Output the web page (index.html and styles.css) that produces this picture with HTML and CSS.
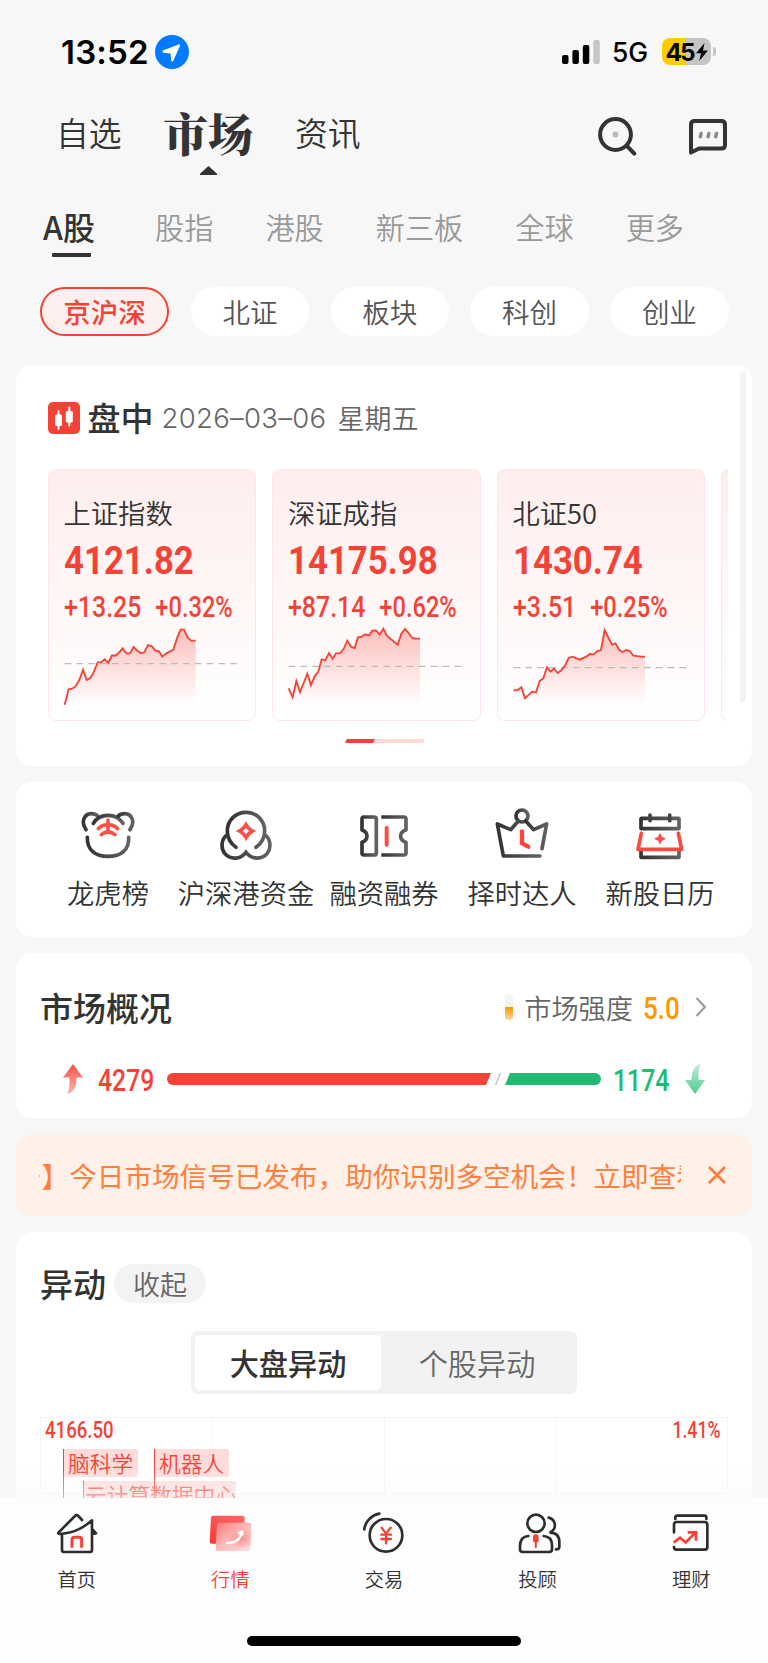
FILE: index.html
```html
<!DOCTYPE html>
<html lang="zh-CN">
<head>
    <meta charset="UTF-8">
    <meta name="viewport" content="width=device-width, initial-scale=1.0">
    <title>市场</title>
    <link rel="stylesheet" href="styles.css">
</head>
<body>
<div class="page">

    <!-- Status Bar -->
    <div class="status-bar">
        <div class="status-left">
            <span class="clock">13:52</span>
            <svg class="location" viewBox="0 0 34 34">
                <circle cx="17" cy="17" r="17" fill="#007aff"/>
                <path d="M24.2 9.3 L7.8 15.6 Q6.8 17.3 8 17.8 L15.6 18.4 L16.2 26 Q17 27.3 18.2 26 L25 10.8 Q25.3 9.2 24.2 9.3 Z" fill="#fff"/>
            </svg>
        </div>
        <div class="status-right">
            <svg class="signal" viewBox="0 0 38 24">
                <rect x="0" y="15" width="6.5" height="9" rx="2"/>
                <rect x="10.4" y="10" width="6.5" height="14" rx="2"/>
                <rect x="20.8" y="5" width="6.5" height="19" rx="2"/>
                <rect x="31.3" y="0" width="6.5" height="24" rx="2" fill="#c6c6c6"/>
            </svg>
            <span class="network">5G</span>
            <div class="battery">
                <span class="level">45</span>
                <svg class="bolt" viewBox="0 0 12 18"><path d="M8.5 0 L0 10.2 H5 L3.2 18 L12 7.4 H7 Z"/></svg>
            </div>
            <span class="battery-cap"></span>
        </div>
    </div>

    <!-- Main Navigation -->
    <div class="main-nav">
        <span class="nav-item">自选</span>
        <span class="nav-item active">市场</span>
        <span class="nav-item">资讯</span>
        <div class="nav-icons">
            <svg width="40" height="40" viewBox="0 0 40 40" fill="none" stroke="#333" stroke-width="4" stroke-linecap="round">
                <circle cx="17.5" cy="18.5" r="15.4"/>
                <path d="M29.5 30.5 L36.3 37.6"/>
                <circle cx="17.5" cy="18.5" r="3" fill="#bbb" stroke="none"/>
            </svg>
            <svg width="40" height="40" viewBox="0 0 40 40" fill="none" stroke="#333" stroke-width="4" stroke-linejoin="round">
                <path d="M3 36.5 V8.5 Q3 5 6.5 5 H33.5 Q37 5 37 8.5 V29 Q37 32.5 33.5 32.5 H11 Q8 34 3 36.5 Z"/>
                <path d="M12.3 20.7 L13.2 17.4 M20 20.7 L20.9 17.4 M27.7 20.7 L28.6 17.4" stroke="#888" stroke-width="3.4" stroke-linecap="round"/>
            </svg>
        </div>
    </div>

    <!-- Market Tabs -->
    <div class="sub-nav">
        <span class="active">A股</span>
        <span>股指</span>
        <span>港股</span>
        <span>新三板</span>
        <span>全球</span>
        <span>更多</span>
    </div>

    <div class="chips">
        <span class="chip active">京沪深</span>
        <span class="chip">北证</span>
        <span class="chip">板块</span>
        <span class="chip">科创</span>
        <span class="chip">创业</span>
    </div>

    <!-- Index Cards -->
    <div class="card index-card">
        <span class="scrollbar"></span>
        <div class="session">
            <svg width="32" height="32" viewBox="0 0 32 32">
                <rect width="32" height="32" rx="5" fill="#f44336"/>
                <path d="M10.5 9 V27 M21.3 5.5 V23.5" stroke="#fff" stroke-width="2" stroke-linecap="round"/>
                <rect x="7" y="12.5" width="7" height="11.5" rx="1.5" fill="#fff"/>
                <rect x="17.8" y="9" width="7" height="11.5" rx="1.5" fill="#fff"/>
            </svg>
            <b>盘中</b>
            <span class="date">2026–03–06</span>
            <span class="weekday">星期五</span>
        </div>
        <div class="index-list">
            <div class="index">
                <div class="index-name">上证指数</div>
                <div class="index-value">4121.82</div>
                <div class="index-change"><span>+13.25</span><span class="percent">+0.32%</span></div>
                <svg class="spark" viewBox="100 520 525 245">
                    <defs>
                        <linearGradient id="fade" x1="0" y1="535" x2="0" y2="758" gradientUnits="userSpaceOnUse">
                            <stop offset="0" stop-color="#f44336" stop-opacity=".32"/>
                            <stop offset="1" stop-color="#f44336" stop-opacity="0"/>
                        </linearGradient>
                    </defs>
                    <path class="area" d="M105 762 L117 716 L127 714 L137 708 L149 688 L160 657 L171 688 L182 682 L192 665 L204 635 L214 635 L225 626 L236 637 L247 614 L257 615 L268 606 L279 593 L290 608 L301 608 L312 589 L323 600 L334 608 L344 605 L355 583 L366 586 L377 600 L388 602 L398 618 L410 608 L431 597 L443 560 L453 537 L463 537 L474 561 L485 570 L498 570 V758 H105 Z"/>
                    <path class="base" d="M105 639 H621"/>
                    <path class="line" d="M105 762 L117 716 L127 714 L137 708 L149 688 L160 657 L171 688 L182 682 L192 665 L204 635 L214 635 L225 626 L236 637 L247 614 L257 615 L268 606 L279 593 L290 608 L301 608 L312 589 L323 600 L334 608 L344 605 L355 583 L366 586 L377 600 L388 602 L398 618 L410 608 L431 597 L443 560 L453 537 L463 537 L474 561 L485 570 L498 570"/>
                </svg>
            </div>
            <div class="index">
                <div class="index-name">深证成指</div>
                <div class="index-value">14175.98</div>
                <div class="index-change"><span>+87.14</span><span class="percent">+0.62%</span></div>
                <svg class="spark" viewBox="82 520 525 245">
                    <path class="area" d="M87 713 L99 740 L110 691 L121 724 L132 697 L143 669 L154 703 L165 677 L176 663 L186 626 L197 629 L208 607 L219 624 L229 608 L240 608 L252 595 L263 570 L274 588 L285 592 L295 560 L306 558 L317 551 L328 554 L338 540 L349 539 L360 552 L371 534 L382 556 L414 582 L425 549 L436 535 L447 547 L457 561 L466 564 L481 564 V758 H87 Z"/>
                    <path class="base" d="M87 647 H606"/>
                    <path class="line" d="M87 713 L99 740 L110 691 L121 724 L132 697 L143 669 L154 703 L165 677 L176 663 L186 626 L197 629 L208 607 L219 624 L229 608 L240 608 L252 595 L263 570 L274 588 L285 592 L295 560 L306 558 L317 551 L328 554 L338 540 L349 539 L360 552 L371 534 L382 556 L414 582 L425 549 L436 535 L447 547 L457 561 L466 564 L481 564"/>
                </svg>
            </div>
            <div class="index">
                <div class="index-name">北证50</div>
                <div class="index-value">1430.74</div>
                <div class="index-change"><span>+3.51</span><span class="percent">+0.25%</span></div>
                <svg class="spark" viewBox="95 520 525 245">
                    <path class="area" d="M100 719 L112 718 L123 710 L134 743 L155 723 L167 725 L178 691 L189 683 L200 650 L211 663 L221 654 L232 667 L243 659 L254 645 L265 622 L276 618 L298 627 L319 617 L329 610 L340 611 L351 601 L362 598 L373 538 L384 560 L395 582 L405 578 L417 598 L427 604 L438 598 L448 601 L459 615 L482 618 L494 618 V758 H102 Z"/>
                    <path class="base" d="M100 651 H619"/>
                    <path class="line" d="M100 719 L112 718 L123 710 L134 743 L155 723 L167 725 L178 691 L189 683 L200 650 L211 663 L221 654 L232 667 L243 659 L254 645 L265 622 L276 618 L298 627 L319 617 L329 610 L340 611 L351 601 L362 598 L373 538 L384 560 L395 582 L405 578 L417 598 L427 604 L438 598 L448 601 L459 615 L482 618 L494 618"/>
                </svg>
            </div>
            <div class="index"></div>
        </div>
        <div class="pager"><span></span></div>
    </div>

    <!-- Shortcuts -->
    <div class="card shortcuts">
        <div class="shortcut">
            <svg viewBox="244 114 162 162">
                <defs>
                    <linearGradient id="ink" x1="0" y1="0" x2="1" y2="0">
                        <stop offset="0" stop-color="#333"/>
                        <stop offset="1" stop-color="#626262"/>
                    </linearGradient>
                </defs>
                <g fill="none" stroke="url(#ink)" stroke-width="11" stroke-linecap="round">
                    <path d="M259 179 C242 155 255 131 275 131 Q287 131 294 138"/>
                    <path d="M281 160 C300 128 350 128 370 160"/>
                    <path d="M356 138 Q363 131 375 131 C396 131 408 155 391 179"/>
                    <path d="M263 202 C262 240 287 259 325 259 C364 259 389 240 387 202"/>
                </g>
                <g fill="none" stroke="#f8504a" stroke-width="11" stroke-linecap="round">
                    <path d="M325 150 V184 M296 176 Q306 165 325 164 Q344 165 354 176 M305 194 Q325 178 346 194"/>
                </g>
            </svg>
            <span>龙虎榜</span>
        </div>
        <div class="shortcut">
            <svg viewBox="658 114 162 162">
                <g fill="none" stroke="url(#ink)" stroke-width="11" stroke-linecap="round">
                    <path d="M709 232 C688 217 683 197 683 183 C683 151 708 127 739 127 C770 127 795 151 795 183 C795 197 790 217 769 232"/>
                    <path d="M680 196 C665 208 663 235 675 250 C692 270 722 269 739 247 C756 269 786 270 803 250 C815 235 813 208 798 196"/>
                </g>
                <path d="M739 153 Q748 174 770 183 Q748 192 739 214 Q730 192 708 183 Q730 174 739 153 Z" fill="#f8504a"/>
                <path d="M739 174 L748 183 L739 192 L730 183 Z" fill="#fff"/>
            </svg>
            <span>沪深港资金</span>
        </div>
        <div class="shortcut">
            <svg viewBox="1071 114 162 162">
                <g fill="none" stroke="url(#ink)" stroke-width="11" stroke-linejoin="round">
                    <path d="M1091 141 H1122 Q1129 141 1129 148 V248 Q1129 255 1122 255 H1092 Q1086 255 1086 249 V217 Q1101 212 1101 198 Q1101 185 1086 180 V147 Q1086 141 1091 141 Z"/>
                    <path d="M1144 141 H1212 Q1218 141 1218 147 V180 Q1202 185 1202 198 Q1202 212 1218 217 V249 Q1218 255 1212 255 H1144"/>
                </g>
                <path d="M1160 173 V224" stroke="#f8504a" stroke-width="12" stroke-linecap="round"/>
            </svg>
            <span>融资融券</span>
        </div>
        <div class="shortcut">
            <svg viewBox="332 114 162 162">
                <g fill="none" stroke="url(#ink)" stroke-width="11" stroke-linecap="round" stroke-linejoin="round">
                    <circle cx="413" cy="138" r="18"/>
                    <path d="M402 153 L379 179 L339 162 L357 258 H467"/>
                    <path d="M424 153 L448 179 L487 162 L473 236"/>
                </g>
                <path d="M413 184 V220 L432 230" fill="none" stroke="#fa443c" stroke-width="13" stroke-linecap="round" stroke-linejoin="round"/>
            </svg>
            <span>择时达人</span>
        </div>
        <div class="shortcut">
            <svg viewBox="746 114 162 162">
                <g fill="none" stroke="url(#ink)" stroke-width="11" stroke-linejoin="round">
                    <rect x="770" y="145" width="114" height="31" rx="2"/>
                    <path d="M797 135 L797.1 152 M856 135 L856.1 152" stroke="#444" stroke-linecap="round"/>
                    <path d="M770 241 V262 H884 V241"/>
                </g>
                <path d="M771 190 L761 238 H892 L882 190" fill="none" stroke="#fa4a42" stroke-width="11" stroke-linecap="round" stroke-linejoin="round"/>
                <path d="M827 188 L833 200 L845 206 L833 212 L827 224 L821 212 L809 206 L821 200 Z" fill="#f8504a"/>
            </svg>
            <span>新股日历</span>
        </div>
    </div>

    <!-- Market Overview -->
    <div class="card overview">
        <div class="overview-head">
            <h2>市场概况</h2>
            <div class="strength">
                <span class="meter"></span>
                <span class="strength-label">市场强度</span>
                <span class="strength-value">5.0</span>
                <svg width="12" height="20" viewBox="0 0 12 20" fill="none" stroke="#999" stroke-width="2"><path d="M1.5 1 L10 10 L1.5 19"/></svg>
            </div>
        </div>
        <div class="updown">
            <svg class="arrow" viewBox="0 0 20 30">
                <defs>
                    <linearGradient id="up" x1="0" y1="0" x2="0" y2="1"><stop offset="0" stop-color="#f6504a"/><stop offset="1" stop-color="#fbb5b1"/></linearGradient>
                    <linearGradient id="down" x1="0" y1="0" x2="0" y2="1"><stop offset="0" stop-color="#c2ecd8"/><stop offset="1" stop-color="#4cca8e"/></linearGradient>
                </defs>
                <path d="M10 0 L20 13.5 H13.5 Q13.5 28 4 30 Q7 26 6.5 13.5 H0 Z" fill="url(#up)"/>
            </svg>
            <span class="count up"><i>4279</i></span>
            <svg class="ratio" viewBox="0 0 434 12">
                <path d="M6 0 H324 L319 12 H6 A6 6 0 0 1 6 0 Z" fill="#f44336"/>
                <path d="M328.5 12 L333.5 0" stroke="#ccc" stroke-width="1.8"/>
                <path d="M343 0 H428 A6 6 0 0 1 428 12 H338 Z" fill="#22b975"/>
            </svg>
            <span class="count down"><i>1174</i></span>
            <svg class="arrow" viewBox="0 0 20 30">
                <path d="M16 0 Q6.5 2 6.5 16 H0 L10 30 L20 16 H13.5 Q13 4 16 0 Z" fill="url(#down)"/>
            </svg>
        </div>
    </div>

    <!-- Notice -->
    <div class="notice">
        <div class="marquee"><span>号】今日市场信号已发布，助你识别多空机会！立即查看</span></div>
        <svg width="18" height="18" viewBox="0 0 18 18" stroke="#ff7a3c" stroke-width="2.6"><path d="M1 1 L17 17 M17 1 L1 17"/></svg>
    </div>

    <!-- Market Moves -->
    <div class="card moves">
        <div class="moves-head">
            <h2>异动</h2>
            <span class="fold">收起</span>
        </div>
        <div class="segment">
            <span class="active">大盘异动</span>
            <span>个股异动</span>
        </div>
        <div class="chart">
            <div class="grid"><span></span><span></span><span></span><span></span></div>
            <div class="axis">
                <span class="axis-left">4166.50</span>
                <span class="axis-right">1.41%</span>
            </div>
            <span class="tag tag-brain">脑科学</span>
            <span class="tag tag-robot">机器人</span>
            <span class="tag tag-cloud">云计算数据中心</span>
            <div class="chart-fade"></div>
        </div>
    </div>

    <!-- Bottom Tab Bar -->
    <div class="tab-bar">
        <div class="tab">
            <svg viewBox="159 88 144 144">
                <g fill="none" stroke="#2d2d2d" stroke-width="8" stroke-linecap="round" stroke-linejoin="round">
                    <path d="M246 121 L235 109 Q230 104 225 109 L176 158 Q172 163 181 163 C225 160 251 144 276 122 V211 Q276 217 270 217 H192 Q186 217 186 211 V166"/>
                    <path d="M279 151 L288 161 L279 162"/>
                </g>
                <path d="M216 204 V181 Q216 173 224 173 H237 Q245 173 245 181 V204" fill="none" stroke="#f44336" stroke-width="9"/>
            </svg>
            <span>首页</span>
        </div>
        <div class="tab active">
            <svg viewBox="619 88 144 144">
                <defs>
                    <linearGradient id="back" x1="0" y1="1" x2="1" y2="0"><stop offset="0" stop-color="#f83a34"/><stop offset="1" stop-color="#ff6c6c"/></linearGradient>
                    <linearGradient id="front" x1="0" y1="0" x2="1" y2="1"><stop offset="0" stop-color="#fb7a76"/><stop offset=".5" stop-color="#fcbab8"/><stop offset="1" stop-color="#fde4e4"/></linearGradient>
                    <radialGradient id="glow" cx=".72" cy=".55" r=".4"><stop offset="0" stop-color="#f98583" stop-opacity=".8"/><stop offset="1" stop-color="#f98583" stop-opacity="0"/></radialGradient>
                </defs>
                <path d="M641 108 H729 Q735 108 735 114 L732 186 Q732 192 725 192 H636 Q630 192 630 186 L634 115 Q634 108 641 108 Z" fill="url(#back)"/>
                <path d="M660 129 H749 Q755 129 755 136 L752 207 Q752 214 744 214 H655 Q648 214 648 207 L652 136 Q652 129 660 129 Z" fill="url(#front)"/>
                <path d="M660 129 H749 Q755 129 755 136 L752 207 Q752 214 744 214 H655 Q648 214 648 207 L652 136 Q652 129 660 129 Z" fill="url(#glow)"/>
                <path d="M682 190 Q718 190 726 160 M717 160 L727 156 L728 164" fill="none" stroke="#fff" stroke-width="8" stroke-linecap="round" stroke-linejoin="round"/>
            </svg>
            <span>行情</span>
        </div>
        <div class="tab">
            <svg viewBox="1080 88 144 144" fill="none" stroke-width="8" stroke-linecap="round">
                <circle cx="1158" cy="167" r="49" stroke="#2d2d2d"/>
                <path d="M1093 149 C1096 124 1115 107 1138 102" stroke="#2d2d2d"/>
                <path d="M1145 144 L1158 162 L1172 144 M1158 162 V191 M1144 165 H1173 M1144 178 H1173" stroke="#f44336" stroke-width="7"/>
            </svg>
            <span>交易</span>
        </div>
        <div class="tab">
            <svg viewBox="437 88 144 144" fill="none" stroke="#2d2d2d" stroke-width="8" stroke-linecap="round">
                <circle cx="503" cy="131" r="26"/>
                <path d="M480 169 C463 170 455 181 455 200 V209 Q455 217 463 217 H543 Q551 217 551 209 V197 C551 180 542 170 526 169"/>
                <path d="M541 114 C562 119 568 148 544 159 C563 159 573 168 573 188 V202 Q573 209 563 209"/>
                <rect x="494" y="164" width="17" height="25" rx="8" fill="#f44336" stroke="none"/>
                <path d="M502.5 184 V203" stroke="#f44336" stroke-width="6"/>
            </svg>
            <span>投顾</span>
        </div>
        <div class="tab">
            <svg viewBox="898 88 144 144" fill="none" stroke="#2d2d2d" stroke-width="8" stroke-linecap="round" stroke-linejoin="round">
                <path d="M923 118 V114 Q923 108 929 108 H1010 Q1016 108 1016 114 V118"/>
                <path d="M919 158 V135 Q919 127 927 127 H1011 Q1019 127 1019 135 V202 Q1019 210 1011 210 H927 Q919 210 919 202"/>
                <path d="M918 189 L937 174 L954 188 L982 160 M960 158 H985 V183" stroke="#f44336" stroke-linecap="butt" stroke-linejoin="miter"/>
            </svg>
            <span>理财</span>
        </div>
    </div>
    <div class="home-indicator"><span></span></div>

</div>
</body>
</html>
```

FILE: styles.css
```css
* {
    margin: 0;
    padding: 0;
    box-sizing: border-box;
}
body {
    background-color: #f7f7f7;
    font-family: 'Noto Sans CJK SC', sans-serif;
    color: #333;
}
.page {
    width: 768px;
    height: 1663px;
    overflow: hidden;
    display: flex;
    flex-direction: column;
    white-space: nowrap;
}
svg {
    display: block;
    flex: none;
}

/* Status bar */
.status-bar {
    display: flex;
    justify-content: space-between;
    height: 103px;
    padding: 0 52px 0 61px;
    color: #000;
    font-family: Inter, sans-serif;
}
.status-left, .status-right {
    display: flex;
    align-items: center;
}
.clock {
    width: 95px;
    font-size: 33px;
    font-weight: 600;
    letter-spacing: 0.2px;
}
.location {
    width: 34px;
    height: 34px;
}
.signal {
    width: 38px;
    height: 24px;
}
.network {
    margin-left: 12px;
    width: 50px;
    font-size: 26.5px;
    font-weight: 500;
    letter-spacing: -0.2px;
}
.battery {
    display: flex;
    align-items: center;
    justify-content: center;
    width: 49px;
    height: 27px;
    border-radius: 8px;
    background: linear-gradient(to right, #ffcc00 23px, #c5c5c5 23px);
}
.level {
    font-size: 24.5px;
    font-weight: 700;
    letter-spacing: -2px;
}
.bolt {
    width: 12px;
    height: 18px;
    margin-left: 2px;
}
.battery-cap {
    width: 3px;
    height: 9px;
    margin-left: 2px;
    border-radius: 0 4px 4px 0;
    background-color: #c5c5c5;
}
.status-left .location {
    margin-left: -1px;
}

/* Navigation */
.main-nav {
    display: flex;
    align-items: center;
    height: 62px;
    padding: 0 40px 0 56px;
}
.nav-item {
    width: 107px;
    margin-top: -6px;
    font-size: 32.8px;
    font-weight: 350;
}
.nav-item.active {
    position: relative;
    width: 132px;
    margin-top: -2px;
    font-family: 'Noto Serif CJK SC', 'Noto Sans CJK SC', serif;
    font-size: 45px;
    font-weight: 900;
    line-height: 62px;
}
.nav-item.active::after {
    content: "";
    position: absolute;
    left: 37px;
    top: 64px;
    width: 17px;
    height: 9px;
    background-color: #333;
    clip-path: polygon(50% 0, 100% 85%, 100% 100%, 0 100%, 0 85%);
}
.nav-icons {
    display: flex;
    gap: 50px;
    margin-left: auto;
    padding-top: 3px;
}
.sub-nav {
    display: flex;
    align-items: center;
    gap: 52px;
    height: 82px;
    margin-top: 20px;
    padding: 0 42px 0 43px;
    font-size: 29.2px;
    font-weight: 350;
    color: #999;
}
.sub-nav .active {
    position: relative;
    width: 60px;
    font-size: 32px;
    font-weight: 500;
    color: #333;
}
.sub-nav .active::after {
    content: "";
    position: absolute;
    left: 9px;
    bottom: -8px;
    width: 39px;
    height: 4px;
    border-radius: 1px;
    background-color: #333;
}
.chips {
    display: flex;
    gap: 21.5px;
    padding: 0 39.5px;
    margin-top: 20px;
}
.chip {
    width: 118.3px;
    height: 49px;
    border-radius: 25px;
    background-color: #fff;
    font-size: 27.5px;
    font-weight: 350;
    line-height: 48px;
    text-align: center;
    color: #555;
}
.chip.active {
    width: 130px;
    border: 2px solid #f44336;
    background-color: #fff0f0;
    line-height: 44px;
    color: #f44336;
    font-weight: 500;
}

/* Cards */
.card {
    flex: none;
    margin: 0 16px 16px;
    border-radius: 16px;
    background-color: #fff;
}
.card h2 {
    font-size: 33px;
    font-weight: 500;
    line-height: 40px;
}
.index-card {
    position: relative;
    height: 401px;
    margin-top: 29px;
    padding: 33px 24px 0 31.5px;
}
.scrollbar {
    position: absolute;
    right: 6px;
    top: 6px;
    width: 6px;
    height: 331px;
    border-radius: 3px;
    background-color: #f3f3f3;
}
.session {
    display: flex;
    align-items: center;
    height: 39px;
}
.session b {
    width: 74px;
    margin-left: 8px;
    font-size: 33px;
    font-weight: 500;
    line-height: 37px;
}
.date {
    width: 176px;
    font-family: Inter, sans-serif;
    font-size: 27.5px;
    font-weight: 300;
    letter-spacing: 0.3px;
    color: #666;
}
.weekday {
    font-size: 27px;
    font-weight: 350;
    line-height: 36px;
    color: #666;
}
.index-list {
    display: flex;
    gap: 16px;
    height: 252px;
    margin-top: 32px;
    overflow: hidden;
}
.index {
    flex: none;
    width: 208.5px;
    padding: 22px 0 0 15px;
    border: 1.5px solid #fde6e5;
    border-radius: 8px;
    background: linear-gradient(#feeeed, #fff);
}
.index-name {
    font-size: 27.3px;
    font-weight: 350;
    line-height: 40px;
}
.index-value {
    width: max-content;
    margin-top: 4px;
    font-family: Roboto, sans-serif;
    font-size: 38px;
    font-weight: 700;
    line-height: 50px;
    color: #f44336;
    transform: scaleX(.915);
    transform-origin: left;
}
.index-change {
    display: flex;
    gap: 17px;
    width: max-content;
    margin-top: 1px;
    font-family: Roboto, sans-serif;
    font-size: 30px;
    font-weight: 500;
    line-height: 40px;
    color: #f44336;
    transform: scaleX(.83);
    transform-origin: left;
}
.percent {
    transform: scaleX(.95);
    transform-origin: left;
}
.spark {
    width: 175px;
    height: 81.7px;
    margin: -3px 0 0 -1px;
}
.area {
    fill: url(#fade);
}
.base {
    fill: none;
    stroke: #bbb;
    stroke-width: 4;
    stroke-dasharray: 20 15.5;
}
.line {
    fill: none;
    stroke: #f44336;
    stroke-width: 5.5;
}
.pager {
    width: 78px;
    height: 4px;
    margin: 18px 0 0 298px;
    background-color: #fddcda;
    transform: skewX(-25deg);
}
.pager span {
    display: block;
    width: 28px;
    height: 4px;
    background-color: #f44336;
}

/* Shortcuts */
.shortcuts {
    display: flex;
    height: 155px;
    padding: 26px 23px 0;
}
.shortcut {
    flex: 1 1 0;
    display: flex;
    flex-direction: column;
    align-items: center;
    font-size: 27.3px;
    font-weight: 350;
    line-height: 40px;
}
.shortcut span {
    margin-top: 10px;
}
.shortcut svg {
    width: 54px;
    height: 54px;
}

/* Overview */
.overview {
    height: 165px;
    padding: 34px 45px 0 24px;
}
.overview-head {
    display: flex;
    justify-content: space-between;
    align-items: center;
}
.strength {
    display: flex;
    align-items: center;
}
.meter {
    width: 8px;
    height: 26px;
    border-radius: 4px;
    background: linear-gradient(#f3f3f3 13px, #ff9800 13px, #fdd7a0 26px);
}
.strength-label {
    margin-left: 11px;
    font-size: 27.2px;
    font-weight: 350;
    color: #666;
}
.strength-value {
    width: 52px;
    margin: 3px 0 0 10px;
    font-family: Roboto, sans-serif;
    font-size: 31px;
    font-weight: 500;
    color: #ff9800;
    transform: scaleX(.84);
    transform-origin: left;
}
.updown {
    display: flex;
    align-items: center;
    height: 40px;
    margin: 32px 0 0 23px;
}
.arrow {
    width: 20px;
    height: 30px;
}
.count {
    width: 56px;
    padding-top: 2px;
    font-family: Roboto, sans-serif;
    font-size: 31px;
    font-weight: 500;
}
.count i {
    display: inline-block;
    font-style: normal;
    transform: scaleX(.8);
    transform-origin: left;
}
.count.up {
    margin: 0 13px 0 15px;
    color: #f44336;
}
.count.down {
    margin: 0 16px 0 12px;
    color: #22b975;
}
.ratio {
    width: 434px;
    height: 12px;
}

/* Notice */
.notice {
    flex: none;
    display: flex;
    align-items: center;
    justify-content: space-between;
    height: 82px;
    margin: 0 16px 16px;
    padding: 0 26px 0 23px;
    border-radius: 16px;
    background-color: #fff0e8;
}
.marquee {
    width: 642px;
    overflow: hidden;
    font-size: 27.6px;
    color: #ff7f3f;
}
.marquee span {
    display: block;
    margin-left: -25px;
}

/* Market moves */
.moves {
    height: 266px;
    margin-bottom: 0;
    padding: 31px 24px 0;
    border-radius: 16px 16px 0 0;
    overflow: hidden;
}
.moves-head {
    display: flex;
    align-items: center;
    gap: 8px;
    height: 40px;
}
.fold {
    width: 92px;
    height: 39px;
    border-radius: 20px;
    background-color: #f3f3f3;
    font-size: 27px;
    font-weight: 350;
    line-height: 39px;
    text-align: center;
    color: #666;
}
.segment {
    display: flex;
    width: 386px;
    height: 63px;
    margin: 28px auto 0;
    padding: 4px;
    border-radius: 7px;
    background-color: #f2f2f2;
}
.segment span {
    flex: 1 1 0;
    border-radius: 5px;
    font-size: 29.2px;
    font-weight: 350;
    line-height: 54px;
    text-align: center;
    color: #666;
}
.segment .active {
    flex: 0 0 186px;
    background-color: #fff;
    font-weight: 500;
    color: #333;
}
.chart {
    position: relative;
    height: 100px;
    margin-top: 23px;
}
.grid {
    display: flex;
    height: 77px;
    border: 1px solid #f5f5f5;
}
.grid span {
    flex: 1 1 0;
    height: 100px;
}
.grid span + span {
    border-left: 1px solid #f5f5f5;
}
.axis {
    position: absolute;
    left: 5px;
    right: 7px;
    top: 1px;
    display: flex;
    justify-content: space-between;
    font-family: Roboto, sans-serif;
    font-size: 23px;
    font-weight: 500;
    line-height: 25px;
    color: #f44336;
}
.axis-left {
    transform: scaleX(.81);
    transform-origin: left;
}
.axis-right {
    transform: scaleX(.77);
    transform-origin: right;
}
/* callouts pinned on the chart */
.tag {
    position: absolute;
    height: 28px;
    padding-left: 4px;
    border-left: 1.5px solid #f44336;
    border-radius: 0 2px 2px 0;
    background-color: #fddcdb;
    font-size: 21.7px;
    font-weight: 350;
    line-height: 27px;
    color: #f44336;
}
.tag-brain {
    left: 23px;
    top: 32px;
    width: 75px;
}
.tag-robot {
    left: 114px;
    top: 32px;
    width: 75px;
}
.tag-brain::before, .tag-robot::before {
    content: "";
    position: absolute;
    left: -1.5px;
    top: 28px;
    z-index: 1;
    width: 1.5px;
    height: 30px;
    background-color: #f44336;
}
.tag-cloud {
    left: 43px;
    top: 64px;
    width: 153px;
    padding-left: 1px;
}
.chart-fade {
    position: absolute;
    left: -24px;
    right: -24px;
    top: 50px;
    z-index: 2;
    height: 31px;
    background: linear-gradient(rgba(250, 250, 250, 0), rgba(250, 250, 250, .55));
}

/* Tab bar */
.tab-bar {
    flex: none;
    display: flex;
    height: 110px;
    padding-top: 11px;
    background-color: #fdfdfd;
}
.tab {
    flex: 1 1 0;
    display: flex;
    flex-direction: column;
    align-items: center;
    font-size: 19.3px;
    font-weight: 350;
    line-height: 28px;
}
.tab svg {
    width: 48px;
    height: 48px;
}
.tab span {
    margin-top: 8px;
}
.tab.active {
    color: #f44336;
}
.home-indicator {
    flex: none;
    height: 55px;
    padding-top: 28px;
    background-color: #fefefe;
}
.home-indicator span {
    display: block;
    width: 274px;
    height: 10px;
    margin: 0 auto;
    border-radius: 5px;
    background-color: #000;
}
```
